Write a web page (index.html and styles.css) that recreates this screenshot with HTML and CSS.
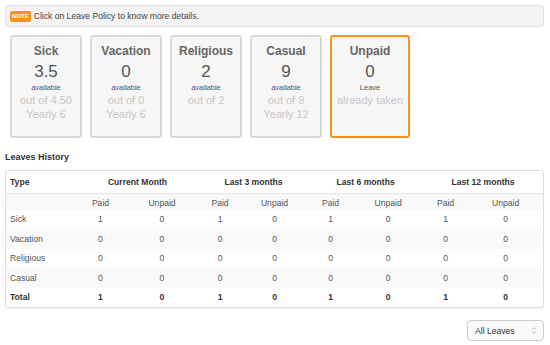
FILE: index.html
```html
<!DOCTYPE html>
<html>
<head>
<meta charset="utf-8">
<link rel="stylesheet" href="styles.css">
</head>
<body>
<div class="page">
  <div class="note"><span class="badge">NOTE</span><span class="note-text">Click on Leave Policy to know more details.</span></div>

  <div class="cards">
    <div class="card">
      <div class="title">Sick</div>
      <div class="num">3.5</div>
      <div class="small">available</div>
      <div class="light">out of 4.50</div>
      <div class="light">Yearly 6</div>
    </div>
    <div class="card">
      <div class="title">Vacation</div>
      <div class="num">0</div>
      <div class="small">available</div>
      <div class="light">out of 0</div>
      <div class="light">Yearly 6</div>
    </div>
    <div class="card">
      <div class="title">Religious</div>
      <div class="num">2</div>
      <div class="small">available</div>
      <div class="light">out of 2</div>
    </div>
    <div class="card">
      <div class="title">Casual</div>
      <div class="num">9</div>
      <div class="small">available</div>
      <div class="light">out of 9</div>
      <div class="light">Yearly 12</div>
    </div>
    <div class="card active">
      <div class="title">Unpaid</div>
      <div class="num">0</div>
      <div class="small">Leave</div>
      <div class="light">already taken</div>
    </div>
  </div>

  <h3 class="section">Leaves History</h3>

  <div class="table-wrap">
    <table class="hist">
      <colgroup>
        <col class="c-type"><col class="c-p1"><col class="c-u1"><col class="c-p2"><col class="c-u2"><col class="c-p3"><col class="c-u3"><col class="c-p4"><col class="c-u4">
      </colgroup>
      <thead>
        <tr class="head">
          <th class="left">Type</th>
          <th colspan="2">Current Month</th>
          <th colspan="2">Last 3 months</th>
          <th colspan="2">Last 6 months</th>
          <th colspan="2">Last 12 months</th>
        </tr>
      </thead>
      <tbody>
        <tr class="sub"><td></td><td>Paid</td><td>Unpaid</td><td>Paid</td><td>Unpaid</td><td>Paid</td><td>Unpaid</td><td>Paid</td><td>Unpaid</td></tr>
        <tr><td class="left">Sick</td><td>1</td><td>0</td><td>1</td><td>0</td><td>1</td><td>0</td><td>1</td><td>0</td></tr>
        <tr><td class="left">Vacation</td><td>0</td><td>0</td><td>0</td><td>0</td><td>0</td><td>0</td><td>0</td><td>0</td></tr>
        <tr><td class="left">Religious</td><td>0</td><td>0</td><td>0</td><td>0</td><td>0</td><td>0</td><td>0</td><td>0</td></tr>
        <tr><td class="left">Casual</td><td>0</td><td>0</td><td>0</td><td>0</td><td>0</td><td>0</td><td>0</td><td>0</td></tr>
        <tr class="total"><td class="left">Total</td><td>1</td><td>0</td><td>1</td><td>0</td><td>1</td><td>0</td><td>1</td><td>0</td></tr>
      </tbody>
    </table>
  </div>

  <div class="footer">
    <div class="select"><span>All Leaves</span><svg class="arrows" width="6" height="9" viewBox="0 0 6 9"><path d="M1 3.5 L3 1.5 L5 3.5 M1 5.5 L3 7.5 L5 5.5" fill="none" stroke="#aaa" stroke-width="0.9"/></svg></div>
  </div>
</div>
</body>
</html>
```

FILE: styles.css
```css
* { box-sizing: border-box; }
html, body { margin: 0; padding: 0; background: #fff; }
body { font-family: "Liberation Sans", Arial, sans-serif; color: #555; }

.page { padding: 5px 6px 0 5px; width: 550px; }

.note {
  display: flex; align-items: center;
  height: 22px;
  background: #f3f3f3;
  border: 1px solid #e3e3e3;
  border-radius: 3px;
  padding-left: 4px;
}
.badge {
  background: #f7941d;
  color: #fff;
  font-weight: bold;
  font-size: 6px;
  line-height: 11px;
  height: 11px;
  padding: 0 2px;
  border-radius: 2px;
}
.note-text { font-size: 8.6px; color: #444; margin-left: 3px; }

.cards { display: flex; gap: 8px; margin: 8px 0 0 5px; }
.card {
  min-width: 72px;
  height: 103px;
  padding: 6px 5px 0;
  background: #f6f6f6;
  border: 2px solid #d4dad4;
  border-radius: 3px;
  text-align: center;
}
.card.active { border-color: #f7931e; }
.title { font-weight: bold; font-size: 12px; line-height: 16px; color: #666; }
.num { font-size: 17px; line-height: 22px; padding-top: 2px; color: #555; }
.small { font-size: 7.5px; line-height: 10px; color: #555; }
.light { font-size: 11px; line-height: 14px; color: #c8c8c8; white-space: nowrap; }

.section { margin: 12px 0 0; font-size: 9px; font-weight: bold; color: #333; line-height: 14px; }

.table-wrap {
  margin-top: 6px;
  width: 539px;
  border: 1px solid #ddd;
  border-radius: 3px;
  box-shadow: 0 1px 1px rgba(0,0,0,0.06);
  overflow: hidden;
}
.hist { width: 100%; border-collapse: collapse; table-layout: fixed; font-size: 8.6px; }
.c-type { width: 70px; }
.c-p1 { width: 49px; } .c-u1 { width: 74px; }
.c-p2 { width: 42px; } .c-u2 { width: 67px; }
.c-p3 { width: 45px; } .c-u3 { width: 70px; }
.c-p4 { width: 45px; } .c-u4 { width: 75px; }
.hist th, .hist td { text-align: center; padding: 0; height: 19.5px; }
.hist .left { text-align: left; padding-left: 4px; }
.head th { height: 22px; font-weight: bold; color: #333; border-bottom: 1px solid #e6e6e6; }
.hist tr.sub td { height: 16.5px; padding-top: 2px; }
.hist tbody tr:nth-child(odd) { background: #f9f9f9; }
.hist td { color: #555; }
.total td { font-weight: bold; color: #333; }

.footer { display: flex; justify-content: flex-end; margin-top: 12px; }
.select {
  width: 77px; height: 21px;
  display: flex; align-items: center; justify-content: space-between;
  padding: 0 6px 0 7px;
  border: 1px solid #ccc;
  border-radius: 4px;
  background: #fafafa;
  font-size: 8.6px; color: #333;
}
```
